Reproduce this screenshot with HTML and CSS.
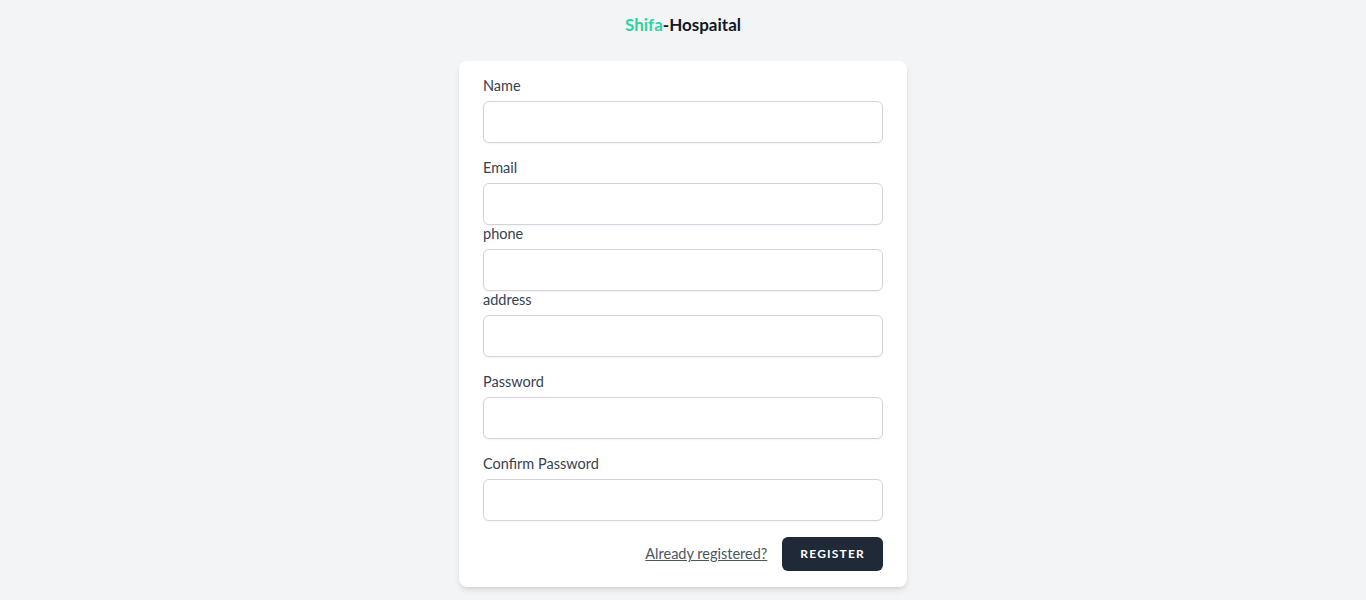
FILE: index.html
```html
<!DOCTYPE html>
<html lang="en">
<head>
<meta charset="utf-8">
<title>Shifa-Hospaital</title>
<link rel="stylesheet" href="styles.css">
</head>
<body>
<div class="page">
  <div class="brand"><span class="brand-accent">Shifa</span>-Hospaital</div>
  <div class="card">
    <form class="form">
      <div class="field">
        <label class="label" for="name">Name</label>
        <input class="input" id="name" type="text">
      </div>
      <div class="field spaced">
        <label class="label" for="email">Email</label>
        <input class="input" id="email" type="email">
      </div>
      <div class="field">
        <label class="label" for="phone">phone</label>
        <input class="input" id="phone" type="text">
      </div>
      <div class="field">
        <label class="label" for="address">address</label>
        <input class="input" id="address" type="text">
      </div>
      <div class="field spaced">
        <label class="label" for="password">Password</label>
        <input class="input" id="password" type="password">
      </div>
      <div class="field spaced">
        <label class="label" for="confirm">Confirm Password</label>
        <input class="input" id="confirm" type="password">
      </div>
      <div class="actions">
        <a class="link" href="#">Already registered?</a>
        <button class="btn" type="button">Register</button>
      </div>
    </form>
  </div>
</div>
</body>
</html>
```

FILE: styles.css
```css
* { box-sizing: border-box; }
html, body { margin: 0; padding: 0; }
body {
  background: #f3f4f6;
  font-family: "Lato", "Noto Sans", sans-serif;
  color: #111827;
}
.page {
  display: flex;
  flex-direction: column;
  align-items: center;
  padding-top: 11px;
  min-height: 600px;
}
.brand {
  font-size: 17px;
  font-weight: 700;
  line-height: 28px;
  color: #111827;
}
.brand-accent { color: #2dd4a0; }
.card {
  margin-top: 22px;
  width: 448px;
  background: #fff;
  border-radius: 8px;
  box-shadow: 0 4px 6px -1px rgba(0,0,0,0.1), 0 2px 4px -2px rgba(0,0,0,0.1);
  padding: 16px 24px;
}
.form { display: flex; flex-direction: column; }
.field { display: flex; flex-direction: column; }
.spaced { margin-top: 16px; }
.label {
  font-size: 14.5px;
  line-height: 20px;
  color: #374151;
  font-weight: 400;
  margin-top: -1px;
  margin-bottom: 1px;
}
.input {
  margin-top: 4px;
  height: 42px;
  width: 100%;
  border: 1px solid #d1d5db;
  border-radius: 6px;
  box-shadow: 0 1px 2px 0 rgba(0,0,0,0.05);
  background: #fff;
  font: inherit;
  padding: 8px 12px;
}
.actions {
  margin-top: 16px;
  display: flex;
  justify-content: flex-end;
  align-items: center;
}
.link {
  font-size: 14.5px;
  line-height: 20px;
  color: #4b5563;
  text-decoration: underline;
}
.btn {
  margin-left: 15px;
  background: #1f2937;
  color: #fff;
  border: 1px solid transparent;
  border-radius: 6px;
  padding: 8px 17px;
  font-family: inherit;
  font-size: 12px;
  line-height: 16px;
  font-weight: 700;
  text-transform: uppercase;
  letter-spacing: 0.1em;
  height: 34px;
}
```
